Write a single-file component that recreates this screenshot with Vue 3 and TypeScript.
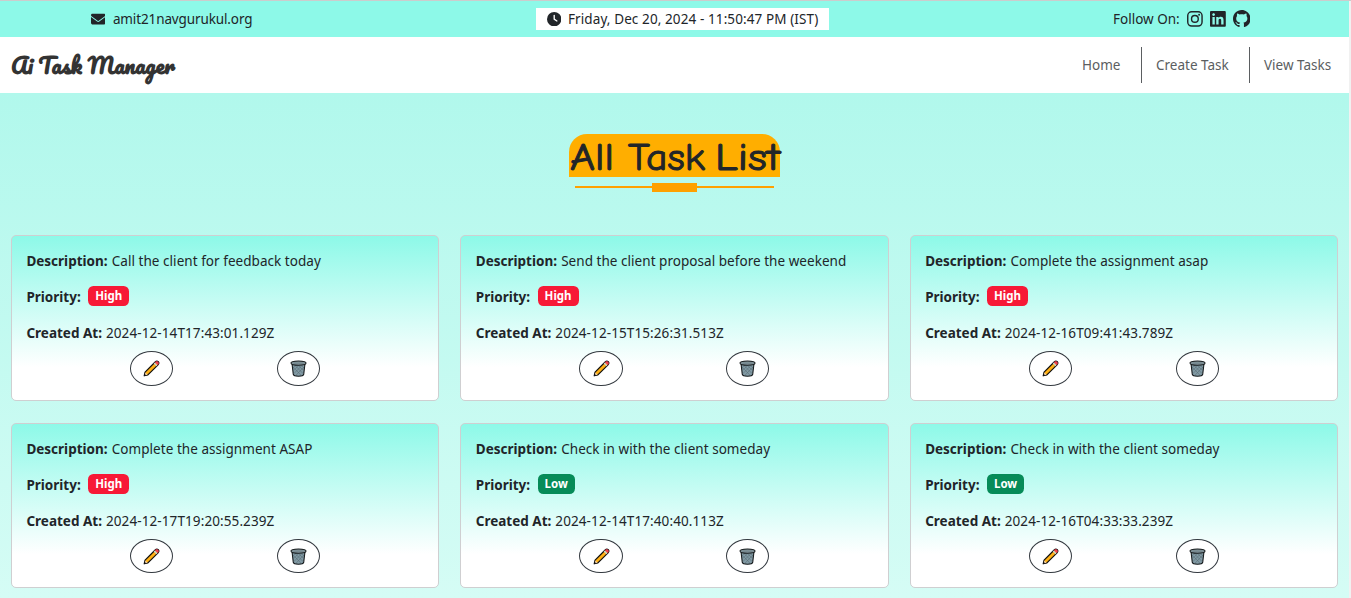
<script setup lang="ts">
interface Task {
  description: string
  priority: 'High' | 'Low'
  createdAt: string
}

const tasks: Task[] = [
  { description: 'Call the client for feedback today', priority: 'High', createdAt: '2024-12-14T17:43:01.129Z' },
  { description: 'Send the client proposal before the weekend', priority: 'High', createdAt: '2024-12-15T15:26:31.513Z' },
  { description: 'Complete the assignment asap', priority: 'High', createdAt: '2024-12-16T09:41:43.789Z' },
  { description: 'Complete the assignment ASAP', priority: 'High', createdAt: '2024-12-17T19:20:55.239Z' },
  { description: 'Check in with the client someday', priority: 'Low', createdAt: '2024-12-14T17:40:40.113Z' },
  { description: 'Check in with the client someday', priority: 'Low', createdAt: '2024-12-16T04:33:33.239Z' },
]

const links: string[] = ['Home', 'Create Task', 'View Tasks']
</script>

<template>
  <div class="window">
    <div class="page">
      <div class="topbar">
        <div class="mail">
          <svg class="mail-icon" viewBox="0 0 512 512"><path fill="currentColor" d="M48 64C21.500 64 0 85.500 0 112c0 15.100 7.100 29.300 19.200 38.400L236.800 313.600c11.400 8.500 27 8.500 38.400 0L492.800 150.400c12.100-9.100 19.200-23.300 19.200-38.400 0-26.500-21.500-48-48-48H48zM0 176V384c0 35.300 28.700 64 64 64H448c35.300 0 64-28.700 64-64V176L294.400 339.200c-22.800 17.100-54 17.100-76.800 0L0 176z" /></svg>
          <span class="mail-text">amit21navgurukul.org</span>
        </div>
        <div class="clock">
          <svg class="clock-icon" viewBox="0 0 512 512"><path fill="currentColor" d="M256 0a256 256 0 1 1 0 512A256 256 0 1 1 256 0zM232 120V256c0 8 4 15.500 10.700 20l96 64c11 7.400 25.900 4.400 33.300-6.700s4.400-25.900-6.700-33.300L280 243.200V120c0-13.300-10.700-24-24-24s-24 10.700-24 24z" /></svg>
          <span class="clock-text">Friday, Dec 20, 2024 - 11:50:47 PM (IST)</span>
        </div>
        <div class="follow">
          <span class="follow-text">Follow On:</span>
          <svg class="social" viewBox="0 0 16 16" fill="none" stroke="currentColor"><rect x=".75" y=".75" width="14.500" height="14.500" rx="4" stroke-width="1.450" /><circle cx="8" cy="8" r="3.400" stroke-width="1.450" /><circle cx="12.270" cy="3.730" r=".96" fill="currentColor" stroke="none" /></svg>
          <svg class="social" viewBox="0 0 448 448"><path fill="currentColor" fill-rule="evenodd" d="M416 0H31.900C14.300 0 0 14.500 0 32.300v383.400C0 433.500 14.300 448 31.900 448H416c17.600 0 32-14.500 32-32.300V32.300C448 14.500 433.600 0 416 0zM135.400 384H69V170.200h66.500V384zM102.200 141c-21.300 0-38.500-17.300-38.500-38.500S80.900 64 102.200 64c21.200 0 38.500 17.300 38.500 38.500 0 21.300-17.200 38.500-38.500 38.500zM384.300 384h-66.400V280c0-24.800-.5-56.700-34.500-56.700-34.600 0-39.900 27-39.900 54.900V384h-66.400V170.200h63.700v29.200h.9c8.900-16.800 30.600-34.500 62.900-34.500 67.200 0 79.700 44.300 79.700 101.900V384z" /></svg>
          <svg class="social github" viewBox="0 0 16 16"><path fill="currentColor" d="M8 0C3.580 0 0 3.580 0 8c0 3.540 2.290 6.530 5.470 7.590.4.070.55-.17.55-.38 0-.19-.01-.82-.01-1.490-2.010.37-2.530-.49-2.690-.94-.09-.23-.48-.94-.82-1.130-.28-.15-.68-.52-.01-.53.63-.01 1.080.58 1.230.82.72 1.210 1.870.87 2.330.66.07-.52.28-.87.51-1.070-1.780-.2-3.640-.89-3.640-3.950 0-.87.31-1.590.82-2.150-.08-.2-.36-1.020.08-2.120 0 0 .67-.21 2.200.82.64-.18 1.320-.27 2-.27s1.360.09 2 .27c1.530-1.040 2.200-.82 2.200-.82.44 1.100.16 1.920.08 2.120.51.56.82 1.270.82 2.150 0 3.070-1.870 3.750-3.650 3.950.29.25.54.73.54 1.480 0 1.070-.01 1.930-.01 2.200 0 .21.15.46.55.38A8.010 8.010 0 0 0 16 8c0-4.420-3.580-8-8-8z" /></svg>
        </div>
      </div>

      <nav class="nav">
        <svg class="brand" viewBox="0 0 170 56"><text x="1" y="36.500" textLength="164" lengthAdjust="spacingAndGlyphs">Ai Task Manager</text></svg>
        <div class="links">
          <a v-for="l in links" :key="l" class="link">{{ l }}</a>
        </div>
      </nav>

      <main class="main">
        <h1 class="title">
          <svg class="title-svg" viewBox="0 0 211 43">
            <text x="1" y="36" textLength="44" lengthAdjust="spacingAndGlyphs">All</text>
            <text x="59" y="36" textLength="77" lengthAdjust="spacingAndGlyphs">Task</text>
            <text x="146" y="36" textLength="65" lengthAdjust="spacingAndGlyphs">List</text>
          </svg>
        </h1>
        <div class="rule"><span class="rule-block"></span></div>

        <section class="grid">
          <article v-for="(t, i) in tasks" :key="i" class="card">
            <p class="row"><b>Description:</b> <span class="desc">{{ t.description }}</span></p>
            <p class="row"><b>Priority:</b> <span class="badge" :class="t.priority.toLowerCase()">{{ t.priority }}</span></p>
            <p class="row"><b>Created At:</b> <span class="date">{{ t.createdAt }}</span></p>
            <div class="actions">
              <button class="btn" type="button" aria-label="Edit">
                <svg viewBox="0 0 18 18">
                  <path d="M1.300 16.700 2.200 12.800 12.900 2.100Q14.600.6 16.200 1.800 17.500 3.400 15.900 5.100L5.200 15.800Z" fill="#ffb014" stroke="#111" stroke-width="1.300" stroke-linejoin="round" />
                  <path d="M12.900 2.300Q14.600.9 15.900 2 17.100 3.400 15.700 5Z" fill="#f03a50" stroke="#f03a50" stroke-width=".6" />
                  <path d="M11.900 3.300 14.700 6.100" stroke="#c5d0d4" stroke-width="1.500" />
                  <path d="M2.500 13.200 4.800 15.500 2 16.200Z" fill="#f7d7b0" />
                  <path d="M1.300 16.700 1.800 14.700 3.300 16.200Z" fill="#111" />
                </svg>
              </button>
              <button class="btn" type="button" aria-label="Delete">
                <svg viewBox="0 0 18 18">
                  <path d="M2.200 4 3.500 15.300Q3.900 17.200 9 17.200T14.500 15.300L15.800 4Z" fill="#819aa4" stroke="#15191b" stroke-width="1.200" />
                  <path d="M3 7 12 16.500M5.500 6 14 14.500M9 6 14.800 11.500M12.500 6 15 8.500M15 7 6 16.500M12.500 6 4 14.500M9 6 3.500 11.500M5.500 6 3 8.500" stroke="#566a73" stroke-width=".6" fill="none" />
                  <ellipse cx="9" cy="3.300" rx="8" ry="2.300" fill="#8799a0" stroke="#15191b" stroke-width="1.100" />
                  <path d="M3.500 3.300h11" stroke="#6c7d85" stroke-width="1" />
                </svg>
              </button>
            </div>
          </article>
        </section>
      </main>
    </div>
    <div class="scrollbar"></div>
  </div>
</template>

<style>
body {
  margin: 0;
  overflow: hidden;
}
</style>

<style scoped>
.window {
  box-sizing: border-box;
  width: 1351px;
  height: 598px;
  overflow: hidden;
  display: flex;
  border-top: 1px solid #ccc;
  font-family: "Noto Sans", "Open Sans", sans-serif;
  font-size: 13.5px;
  line-height: 21.6px;
  color: #212529;
}
.page {
  width: 1349px;
  flex: none;
}
.scrollbar {
  width: 2px;
  background: #f1f1f1;
}
.topbar {
  height: 36px;
  background: #8df9e8;
  display: grid;
  grid-template-columns: 536px 293px 1fr;
  align-items: center;
}
.mail,
.clock,
.follow {
  display: flex;
  align-items: center;
  white-space: nowrap;
}
.mail-text,
.clock-text,
.follow-text {
  padding-top: 2px;
}
.mail {
  padding-left: 91px;
}
.mail-icon {
  width: 14.400px;
  height: 14.400px;
  margin-right: 7.500px;
}
.mail-text {
  letter-spacing: -0.12px;
}
.clock-text {
  letter-spacing: 0.1px;
}
.clock {
  background: #fff;
  height: 22px;
  box-sizing: border-box;
  padding-left: 11px;
}
.clock-icon {
  width: 14.400px;
  height: 14.400px;
  margin-right: 6.600px;
}
.follow {
  padding-left: 284px;
}
.follow-text {
  width: 67px;
  margin-right: 7px;
}
.social {
  width: 15.800px;
  height: 15.800px;
  margin-right: 7.200px;
}
.github {
  width: 17.500px;
  height: 17.500px;
}
.nav {
  height: 56px;
  background: #fff;
  display: flex;
  align-items: center;
  justify-content: space-between;
}
.brand {
  width: 170px;
  height: 56px;
  margin-left: 10px;
  overflow: visible;
}
.brand text {
  font-family: Pacifico, "Lato", sans-serif;
  font-size: 21.6px;
  font-weight: 700;
  fill: #333;
}
.links {
  display: flex;
  padding-right: 3px;
}
.link {
  box-sizing: border-box;
  height: 36px;
  line-height: 37px;
  padding: 0 15px 0 14px;
  color: #5b5e61;
  white-space: nowrap;
}
.link:nth-child(1) {
  width: 73px;
}
.link:nth-child(2) {
  width: 108px;
}
.link:nth-child(3) {
  width: 97px;
}
.link + .link {
  border-left: 1px solid #5b5e61;
}
.main {
  height: 505px;
  box-sizing: border-box;
  padding-top: 41px;
  background: linear-gradient(#b1f8ec, #d5fcf5);
}
.title {
  margin: 0 auto;
  width: 211px;
  height: 43px;
  background: #ffae00;
  border-radius: 18px 18px 0 0;
}
.title-svg {
  display: block;
  width: 211px;
  height: 43px;
  overflow: visible;
}
.title text {
  font-family: "Comic Sans MS", "Comic Neue", "Noto Sans", sans-serif;
  font-size: 39px;
  font-weight: 500;
  fill: #212529;
  stroke: #212529;
  stroke-width: 1px;
}
.rule {
  width: 199px;
  height: 9px;
  margin: 6px auto 0;
  display: flex;
  justify-content: center;
  background: linear-gradient(#ffa000, #ffa000) 0 3px / 100% 2px no-repeat;
}
.rule-block {
  width: 45px;
  background: #ffa000;
}
.grid {
  margin: 43px 11px 0;
  display: grid;
  grid-template-columns: repeat(3, 428.200px);
  column-gap: 21.200px;
  row-gap: 22px;
}
.card {
  box-sizing: border-box;
  height: 165.600px;
  padding: 15.400px 14.400px 13.400px;
  border: 1px solid #cfcfd1;
  border-radius: 5px;
  background: linear-gradient(#8df9e8, #fff 80%);
}
.row {
  margin: 0 0 14.400px;
  height: 21.600px;
  white-space: nowrap;
}
.row:nth-child(3) {
  margin-bottom: 6.200px;
}
.desc {
  margin-left: 0.7px;
  letter-spacing: 0.04px;
}
.date {
  margin-left: 0.5px;
  letter-spacing: 0.1px;
}
.badge {
  display: inline-block;
  box-sizing: border-box;
  position: relative;
  top: -2px;
  margin-left: 4px;
  height: 20px;
  padding: 0 7px;
  border-radius: 5.400px;
  line-height: 20px;
  font-size: 11.500px;
  font-weight: 700;
  color: #fff;
}
.high {
  background: #f71936;
}
.low {
  background: #068b58;
}
.actions {
  display: flex;
  justify-content: space-evenly;
}
.btn {
  box-sizing: border-box;
  width: 43.200px;
  height: 34.600px;
  padding: 0;
  border: 1px solid #343a40;
  border-radius: 50%;
  background: #fff;
  display: flex;
  align-items: center;
  justify-content: center;
}
.btn svg {
  width: 17px;
  height: 17px;
}
</style>
